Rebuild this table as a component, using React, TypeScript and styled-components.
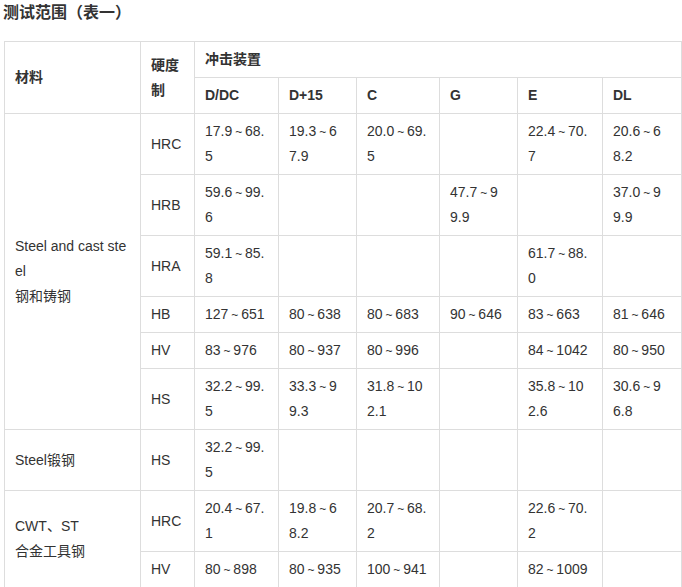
import React from "react";
import styled, { createGlobalStyle } from "styled-components";

const GlobalStyle = createGlobalStyle`
  body {
    margin: 0;
    background: #fff;
    font-family: "Liberation Sans", Arial, "Noto Sans CJK SC", sans-serif;
    color: #333;
  }
`;

const Page = styled.div`
  padding: 0 0 0 4px;
`;

const Title = styled.h3`
  margin: 0 0 17px -1px;
  padding-top: 1px;
  font-size: 16px;
  line-height: 23px;
  font-weight: 700;
  color: #333;
`;

const Table = styled.table`
  border-collapse: collapse;
  table-layout: fixed;
  width: 678px;
  font-size: 14px;
  line-height: 25px;
`;

const HeadCell = styled.th`
  border: 1px solid #ddd;
  padding: 5px 10px;
  text-align: left;
  vertical-align: middle;
  font-weight: 700;
  white-space: nowrap;
`;

const Cell = styled.td`
  border: 1px solid #ddd;
  padding: 5px 10px;
  vertical-align: middle;
  white-space: nowrap;
`;

const Tilde = styled.span`
  font-size: 12px;
  line-height: 0;
  margin: 0 -1px;
`;

const widths = [136, 54, 84, 78, 83, 78, 85, 79];
const devices = ["D/DC", "D+15", "C", "G", "E", "DL"];

// each value is split into the lines it shows in the table
type Row = { scale: string; values: string[][] };
type Group = { material: string[]; rows: Row[] };

const groups: Group[] = [
  {
    material: ["Steel and cast ste", "el", "钢和铸钢"],
    rows: [
      {
        scale: "HRC",
        values: [["17.9 ~ 68.", "5"], ["19.3 ~ 6", "7.9"], ["20.0 ~ 69.", "5"], [], ["22.4 ~ 70.", "7"], ["20.6 ~ 6", "8.2"]],
      },
      { scale: "HRB", values: [["59.6 ~ 99.", "6"], [], [], ["47.7 ~ 9", "9.9"], [], ["37.0 ~ 9", "9.9"]] },
      { scale: "HRA", values: [["59.1 ~ 85.", "8"], [], [], [], ["61.7 ~ 88.", "0"], []] },
      {
        scale: "HB",
        values: [["127 ~ 651"], ["80 ~ 638"], ["80 ~ 683"], ["90 ~ 646"], ["83 ~ 663"], ["81 ~ 646"]],
      },
      { scale: "HV", values: [["83 ~ 976"], ["80 ~ 937"], ["80 ~ 996"], [], ["84 ~ 1042"], ["80 ~ 950"]] },
      {
        scale: "HS",
        values: [["32.2 ~ 99.", "5"], ["33.3 ~ 9", "9.3"], ["31.8 ~ 10", "2.1"], [], ["35.8 ~ 10", "2.6"], ["30.6 ~ 9", "6.8"]],
      },
    ],
  },
  {
    material: ["Steel锻钢"],
    rows: [{ scale: "HS", values: [["32.2 ~ 99.", "5"], [], [], [], [], []] }],
  },
  {
    material: ["CWT、ST", "合金工具钢"],
    rows: [
      { scale: "HRC", values: [["20.4 ~ 67.", "1"], ["19.8 ~ 6", "8.2"], ["20.7 ~ 68.", "2"], [], ["22.6 ~ 70.", "2"], []] },
      { scale: "HV", values: [["80 ~ 898"], ["80 ~ 935"], ["100 ~ 941"], [], ["82 ~ 1009"], []] },
    ],
  },
];

const Range = ({ text }: { text: string }) => {
  const parts = text.split("~");
  if (parts.length < 2) return <>{text}</>;
  return (
    <>
      {parts[0]}
      <Tilde>~</Tilde>
      {parts[1]}
    </>
  );
};

const Lines = ({ lines }: { lines: string[] }) => (
  <>
    {lines.map((l, i) => (
      <React.Fragment key={i}>
        {i > 0 && <br />}
        <Range text={l} />
      </React.Fragment>
    ))}
  </>
);

export default function App() {
  return (
    <Page>
      <GlobalStyle />
      <Title>测试范围（表一）</Title>
      <Table>
        <colgroup>
          {widths.map((w, i) => (
            <col key={i} style={{ width: w }} />
          ))}
        </colgroup>
        <thead>
          <tr>
            <HeadCell rowSpan={2}>材料</HeadCell>
            <HeadCell rowSpan={2}>
              硬度
              <br />制
            </HeadCell>
            <HeadCell colSpan={6}>冲击装置</HeadCell>
          </tr>
          <tr>
            {devices.map((d) => (
              <HeadCell key={d}>{d}</HeadCell>
            ))}
          </tr>
        </thead>
        <tbody>
          {groups.map((g, gi) =>
            g.rows.map((r, ri) => (
              <tr key={`${gi}-${ri}`}>
                {ri === 0 && (
                  <Cell rowSpan={g.rows.length}>
                    <Lines lines={g.material} />
                  </Cell>
                )}
                <Cell>{r.scale}</Cell>
                {r.values.map((v, vi) => (
                  <Cell key={vi}>
                    <Lines lines={v} />
                  </Cell>
                ))}
              </tr>
            ))
          )}
        </tbody>
      </Table>
    </Page>
  );
}
